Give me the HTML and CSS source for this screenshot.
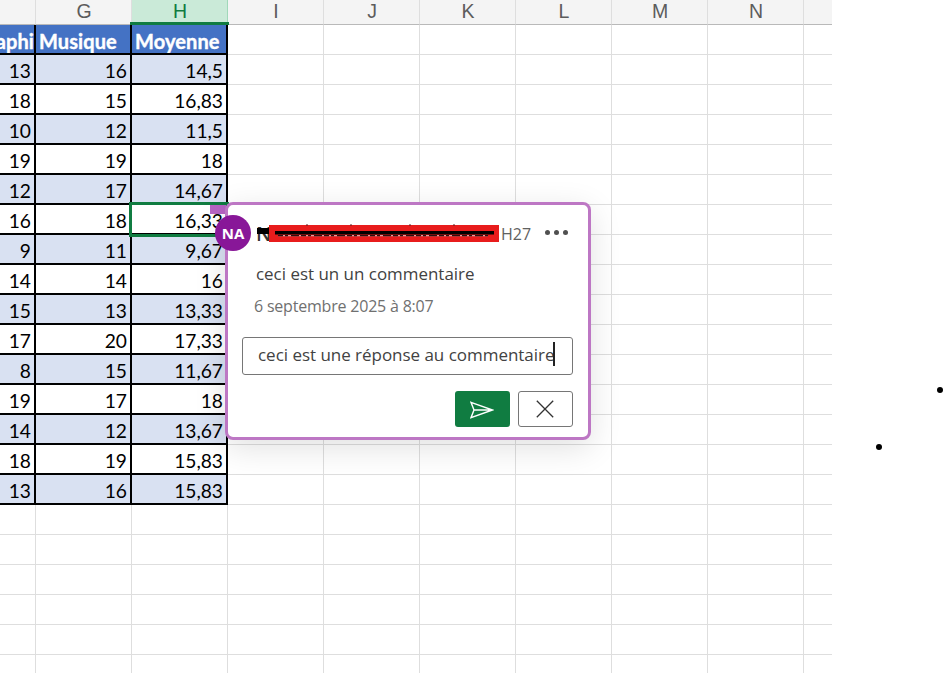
FILE: index.html
```html
<!DOCTYPE html>
<html lang="fr">
<head>
<meta charset="utf-8">
<title>Notes</title>
<link rel="stylesheet" href="styles.css">
</head>
<body>
<main class="sheet" id="sheet"></main>
<section class="comment">
  <span class="avatar">NA</span>
  <header class="comment-head">
    <span class="author">N<svg class="redact" width="244" height="20" viewBox="0 0 244 20"><path d="M1 5h12v6H1z" fill="#000"/><path d="M13 2h230v17H13z" fill="#e81c1c"/><path d="M50 2h2M94 2h2M153 2h2M197 2h2" stroke="#5a2020" stroke-width="1"/><path d="M22 12.6h210" stroke="#d9a0a0" stroke-width="1.4"/><path d="M22 12.6h210" stroke="#2a1010" stroke-width="1.4" stroke-dasharray="5 2 3 3 8 2"/><path d="M19 9.8h219" stroke="#000" stroke-width="3.6"/></svg></span>
    <span class="ref">H27</span>
    <span class="more"><i></i><i></i><i></i></span>
  </header>
  <p class="message"><span>ceci est un un commentaire</span></p>
  <p class="date"><span>6 septembre 2025 à 8:07</span></p>
  <div class="reply"><span>ceci est une réponse au commentaire</span><i class="caret"></i></div>
  <div class="actions">
    <button class="send"><svg width="24" height="18" viewBox="0 0 24 18" fill="none" stroke="#fff" stroke-width="1.4"><path d="M1 1.3 22.5 9 1 16.7 4 9z M4 9h18"/></svg></button>
    <button class="cancel"><svg width="18" height="18" viewBox="0 0 18 18" fill="none" stroke="#333" stroke-width="1.3"><path d="M.8 .8 17.2 17.2M17.2 .8 .8 17.2"/></svg></button>
  </div>
</section>
<i class="dot dot-a"></i>
<i class="dot dot-b"></i>
<script src="sheet.js"></script>
</body>
</html>
```
FILE: styles.css
```css
*, *::before, *::after { box-sizing: border-box; }
body { margin: 0; width: 944px; height: 673px; overflow: hidden; background: #fff; position: relative; font-family: "Open Sans", "Noto Sans", sans-serif; }
.sheet { width: 832px; height: 673px; overflow: hidden; display: grid; grid-template-columns: 36px repeat(9, 96px); grid-template-rows: 25px; grid-auto-rows: 30px; }
.col { background: #f4f4f4; border-right: 1px solid #dedede; border-bottom: 1px solid #b9b9b9; color: #5c5c5c; font: 19.5px/22px "Liberation Sans", sans-serif; text-align: center; padding-left: 1px; }
.col.active { position: relative; background: #caead8; color: #107c41; border-right-color: #a0d8b9; }
.col.active::after { content: ""; position: absolute; left: -2px; right: -2px; bottom: -1px; height: 3px; background: #107c41; }
.cell { border-right: 1px solid #dedede; border-bottom: 1px solid #dedede; }
.cell.data { border-right: 2px solid #000; border-bottom: 2px solid #000; padding-right: 3px; font: 19.2px/32px Lato, sans-serif; color: #000; text-align: right; overflow: hidden; white-space: nowrap; }
.cell.band { background: #d9e1f2; }
.cell.title { background: #4472c4; color: #fff; font-size: 20px; font-weight: 700; letter-spacing: .1px; text-align: left; padding: 0 0 0 3px; -webkit-text-stroke: .4px #fff; }
.cell.cut { padding: 0; display: flex; justify-content: flex-end; }
.cell.selected { position: relative; overflow: visible; }
.cell.selected::after { content: ""; position: absolute; left: -3px; top: -3px; width: 100px; height: 35px; border: 3px solid #107c41; }
.cell.selected::before { content: ""; position: absolute; right: -2px; top: 0; width: 18px; height: 9px; background: #b764c4; }
.comment { position: absolute; left: 225px; top: 202px; width: 366px; height: 238px; border: 3px solid #bd77c4; border-radius: 8px; background: #fff; box-shadow: 0 8px 32px rgba(0,0,0,.12); padding: 18px 15px 10px 14px; }
.avatar { position: absolute; left: -13px; top: 10px; width: 36px; height: 36px; border-radius: 50%; background: #881798; color: #fff; font-size: 15px; font-weight: 700; line-height: 37px; text-align: center; }
.comment-head { display: flex; align-items: center; height: 22px; padding-left: 14px; }
.author { position: relative; width: 244px; font-size: 20px; font-weight: 600; color: #333; line-height: 22px; }
.redact { position: absolute; left: 0; top: 0; }
.ref { width: 45px; font-size: 16px; color: #616161; line-height: 22px; padding-left: 1px; }
.more { display: flex; gap: 4px; margin-bottom: 3px; }
.more i { width: 5px; height: 5px; border-radius: 50%; background: #505050; }
.message, .date { margin: 0; padding-left: 14px; font-size: 16.95px; line-height: 24px; white-space: nowrap; }
.message { margin-top: 17px; color: #424242; }
.date { margin-top: 8px; padding-left: 12px; font-size: 16px; letter-spacing: -.2px; color: #707070; }
.reply { display: flex; align-items: center; height: 38px; margin-top: 19px; padding: 0 0 3px 15px; border: 1px solid #767676; border-radius: 3px; font-size: 17px; letter-spacing: -.03px; color: #424242; white-space: nowrap; width: 331px; }
.caret { width: 2px; height: 24px; margin: -2px 0 0 -1px; background: #222; }
.actions { display: flex; justify-content: flex-end; gap: 8px; margin-top: 16px; width: 331px; }
.actions button { width: 55px; height: 36px; border-radius: 3px; padding: 0; display: flex; align-items: center; justify-content: center; }
.send { background: #107c41; border: 0; }
.actions .send { padding: 2px 1px 0 0; }
.cancel { background: #fff; border: 1px solid #767676; }
.actions .cancel { padding-right: 2px; }
.dot { position: absolute; width: 6px; height: 6px; border-radius: 50%; background: #000; }
.dot-a { left: 937px; top: 387px; }
.dot-b { left: 876px; top: 444px; }
```
FILE: sheet.js
```js
const letters = ["", "G", "H", "I", "J", "K", "L", "M", "N", ""];
const rows = [
  ["aphi", "Musique", "Moyenne"],
  ["13", "16", "14,5"], ["18", "15", "16,83"], ["10", "12", "11,5"],
  ["19", "19", "18"], ["12", "17", "14,67"], ["16", "18", "16,33"],
  ["9", "11", "9,67"], ["14", "14", "16"], ["15", "13", "13,33"],
  ["17", "20", "17,33"], ["8", "15", "11,67"], ["19", "17", "18"],
  ["14", "12", "13,67"], ["18", "19", "15,83"], ["13", "16", "15,83"]
];
const sheet = document.getElementById("sheet");
function add(cls, text) {
  const el = document.createElement("div");
  el.className = cls;
  el.textContent = text;
  sheet.appendChild(el);
}
letters.forEach(l => add("col" + (l === "H" ? " active" : ""), l));
for (let r = 0; r < 22; r++) {
  for (let c = 0; c < 10; c++) {
    if (r < rows.length && c < 3) {
      let cls = "cell data";
      if (r === 0) cls += " title" + (c === 0 ? " cut" : "");
      else if (r % 2) cls += " band";
      if (r === 6 && c === 2) cls += " selected";
      add(cls, rows[r][c]);
    } else add("cell", "");
  }
}
```
